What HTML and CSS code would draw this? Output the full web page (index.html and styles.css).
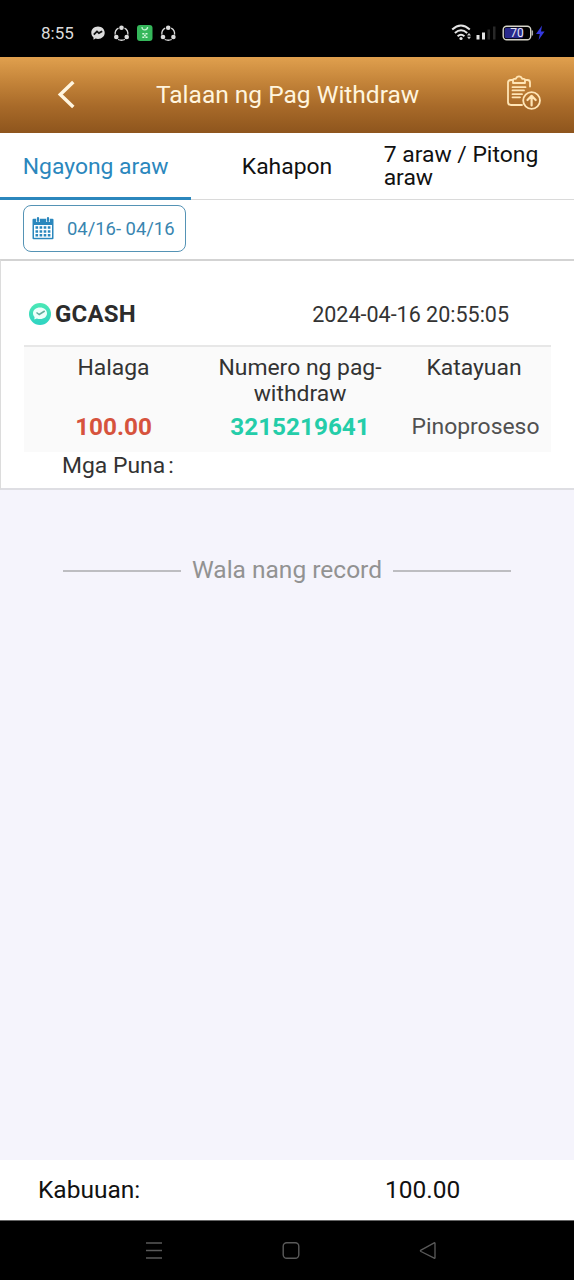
FILE: index.html
```html
<!DOCTYPE html>
<html lang="fil">
<head>
<meta charset="utf-8">
<title>Talaan ng Pag Withdraw</title>
<link rel="stylesheet" href="styles.css">
</head>
<body>
<div class="screen">
  <div class="status">
    <span class="clock">8:55</span>
    <svg class="status-left" width="88" height="20" viewBox="0 0 88 20">
      <g fill="#dcdcdc">
        <path d="M8 3.500C4 3.500 1.300 6.300 1.300 9.800c0 2 .9 3.600 2.200 4.700v2.200l2.100-1.100c.8.200 1.500.300 2.400.300 4 0 6.700-2.700 6.700-6.100S12 3.500 8 3.500z"/>
        <path d="M3.800 11.700L7 8.400l1.900 1.700 3.300-1.900" fill="none" stroke="#111" stroke-width="1.800"/>
      </g>
      <g id="share" fill="#dcdcdc">
        <path d="M28.500 5.200a6.300 6.300 0 0 0-3.300 6.500M34.500 5.200a6.300 6.300 0 0 1 3.300 6.500M28 16.500q3.500 1.500 7 0" fill="none" stroke="#dcdcdc" stroke-width="1.300"/>
        <circle cx="31.500" cy="4.700" r="2.300"/><circle cx="26.300" cy="14" r="2.300"/><circle cx="36.700" cy="14" r="2.300"/>
      </g>
      <rect x="47" y="2" width="15.500" height="16" rx="3" fill="#35b75b"/>
      <path d="M52 4q0 2.800 2.800 2.800T57.600 4" fill="none" stroke="#c5f5d3" stroke-width="1.300"/>
      <path d="M52.300 10.700h2M55.500 10.700h2M54 12.400h1.800M52.300 14.200h2M55.500 14.200h2" fill="none" stroke="#d5f9df" stroke-width="1.500"/>
      <use href="#share" x="46.700"/>
    </svg>
    <svg class="status-right" width="98" height="22" viewBox="0 0 98 22">
      <g fill="none" stroke="#e4e4e4" stroke-width="2">
        <path d="M1.200 7.500q8.700-8 17.600 0M3.900 11q6.100-5.500 12.300 0M6.600 14.200q3.400-3 6.800 0"/>
      </g>
      <circle cx="10" cy="16.500" r="1.600" fill="#e4e4e4"/>
      <path d="M16 13.500l2-2.500 2 2.500zM16 14.800l2 2.500 2-2.500z" fill="#ccc"/>
      <path d="M25.500 13h3v4.500h-3zM31 10.500h3v7h-3z" fill="#e4e4e4"/>
      <path d="M36.500 7.500h2.500v10h-2.500zM42 4.500h2.500v13H42z" fill="#282828"/>
      <rect x="52.200" y="4.300" width="27.500" height="13.400" rx="3.500" fill="#000" stroke="#d6d4c8" stroke-width="1.400"/>
      <rect x="53.600" y="5.700" width="18.500" height="10.600" rx="2" fill="#2a2a8c"/>
      <path d="M81.300 8.500v5" stroke="#aaa" stroke-width="1.500"/>
      <text x="65.900" y="15.300" text-anchor="middle" class="battery">70</text>
      <path d="M91 3.500L85 12h3.800l-1.200 6 6-8.500H90z" fill="#3438df"/>
    </svg>
  </div>

  <header class="header">
    <svg class="back" width="22" height="32" viewBox="0 0 22 32"><path d="M19.300 3L6.300 15.500l13 12.500" fill="none" stroke="#fff5df" stroke-width="3.500"/></svg>
    <h1 class="title">Talaan ng Pag Withdraw</h1>
    <svg class="report" width="38" height="38" viewBox="0 0 38 38" fill="none" stroke="#ffe5b5" stroke-width="1.800" stroke-linecap="round" stroke-linejoin="round">
      <path d="M8.500 5H7Q4 5 4 7.500V27q0 3 3 3h11M21.500 5h2Q26 5 26 7.500v4"/>
      <path d="M9 8V5q0-1.200 1.300-1.200h1.600q.8-2.400 3.100-2.400t3.100 2.400h1.700Q21 3.800 21 5v3z"/>
      <path d="M8.500 12.200h13M8.500 15.400h11.500M8.500 19.200h9.500M8.500 22.300h7.500"/>
      <circle cx="27.600" cy="25.500" r="8.400"/>
      <path d="M27.600 30.500v-9.500M23.500 25l4.100-4.100 4.100 4.100" stroke-width="2.200"/>
    </svg>
  </header>

  <nav class="tabs">
    <div class="tab active"><span class="t-now">Ngayong araw</span></div>
    <div class="tab"><span class="t-yest">Kahapon</span></div>
    <div class="tab week"><span class="t-week">7 araw / Pitong<br>araw</span></div>
  </nav>

  <div class="filter">
    <div class="date-button">
      <svg width="22" height="24" viewBox="0 0 22 24">
        <rect x="0.500" y="2.800" width="21" height="20.500" rx="1" fill="#2b87bd"/>
        <path d="M2 9h18v12.800H2z" fill="#fff"/>
        <path d="M4.200 1h3.600v5H4.200zM14.200 1h3.600v5h-3.600z" fill="#fff"/>
        <path d="M6 2v3M16 2v3" stroke="#2b87bd" stroke-width="2.200" stroke-linecap="round"/>
        <path d="M3.500 11.500h15.200M3.500 15.400h15.200M3.500 19.300h15.200" stroke="#2b87bd" stroke-width="2.500" stroke-dasharray="2.600 1.500"/>
      </svg>
      <span class="range">04/16- 04/16</span>
    </div>
  </div>

  <section class="card">
    <div class="card-head">
      <svg width="24" height="24" viewBox="0 0 24 24">
        <defs><linearGradient id="mint" x1="0" y1="0" x2="0" y2="1"><stop offset="0" stop-color="#4be8b4"/><stop offset="1" stop-color="#2ed3c3"/></linearGradient></defs>
        <circle cx="12" cy="12" r="11" fill="url(#mint)"/>
        <path d="M12 5.500c-4.300 0-7 2.600-7 5.800 0 1.500.6 2.800 1.600 3.800l-.3 2.400 2.600-1c1 .4 2 .6 3.100.6 4.300 0 7-2.500 7-5.800s-2.700-5.800-7-5.800z" fill="#edfffb"/>
        <path d="M8.500 10.500l2.700 2 5.500-3.500" fill="none" stroke="#63ad9d" stroke-width="1.500"/>
      </svg>
      <strong class="method">GCASH</strong>
      <span class="stamp">2024-04-16 20:55:05</span>
    </div>
    <div class="grid">
      <span class="c1">Halaga</span>
      <span class="c2">Numero ng pag-<br>withdraw</span>
      <span class="c3">Katayuan</span>
      <strong class="amount">100.00</strong>
      <strong class="number">3215219641</strong>
      <span class="state">Pinoproseso</span>
    </div>
    <div class="note"><span class="note-label">Mga Puna</span><span class="colon">:</span></div>
  </section>

  <main class="body">
    <div class="end"><i class="rule"></i><span class="end-text">Wala nang record</span><i class="rule"></i></div>
  </main>

  <footer class="total"><span class="total-label">Kabuuan:</span><span class="total-value">100.00</span></footer>

  <div class="navbar">
    <svg width="18" height="20" viewBox="0 0 18 20"><path d="M1 2h16M1 9.500h16M1 17h16" stroke="#5a5a5a" stroke-width="1.400"/></svg>
    <svg width="18" height="20" viewBox="0 0 18 20"><rect x="1.200" y="1.700" width="15.600" height="15.600" rx="3.500" fill="none" stroke="#5a5a5a" stroke-width="1.400"/></svg>
    <svg width="18" height="20" viewBox="0 0 18 20"><path d="M16 2.300v14.400q0 .8-.8.400L2 10.500q-1.200-.7 0-1.400L15.200 1.900q.8-.4.8.4z" fill="none" stroke="#5a5a5a" stroke-width="1.300"/></svg>
  </div>
</div>
</body>
</html>
```
FILE: styles.css
```css
* { box-sizing: border-box; }
body { margin: 0; font-family: Roboto, "Liberation Sans", sans-serif; background: #000; }
svg { display: block; flex: none; }
span, strong { white-space: nowrap; }
.screen { width: 574px; height: 1280px; display: flex; flex-direction: column; }

.status { height: 57px; flex: none; background: #000; display: flex; align-items: center; padding: 9px 25px 0 41px; }
.clock { font-size: 17px; color: #dcdcdc; width: 49px; }
.battery { font-size: 12px; fill: #e6e6f2; font-family: Roboto, sans-serif; }
.status-right { margin-left: auto; }

.header { height: 76px; flex: none; display: flex; align-items: center; padding: 0 32px 0 54px; background: linear-gradient(#e0a04e, #c28238 35%, #a86a29 65%, #8e551d); }
.title { margin: 0 0 0 80px; font-size: 24.500px; font-weight: 400; line-height: 30px; color: #fff5df; white-space: nowrap; }
.report { margin: -3px 0 0 auto; }

.tabs { height: 67px; flex: none; display: grid; grid-template-columns: repeat(3, 1fr); background: #fff; border-bottom: 1px solid #dadada; font-size: 22.900px; line-height: 23px; color: #111; }
.tab { display: flex; align-items: center; justify-content: center; padding-bottom: 1px; }
.active { color: #2b87bd; border-bottom: 3px solid #2b87bd; height: 67px; padding-top: 3px; padding-bottom: 0; }
.week { justify-content: flex-start; padding-left: 1px; }

.filter { height: 60px; flex: none; background: #fff; padding: 5px 0 0 23px; }
.date-button { width: 163px; height: 47px; border: 1.500px solid #5593b5; border-radius: 8px; display: flex; align-items: center; padding: 0 0 1px 8px; }
.range { margin-left: 13px; font-size: 18.400px; color: #3985b0; }

.card { height: 231px; flex: none; background: #fff; border-top: 2px solid #d3d3d3; border-left: 1px solid #dcdcdc; border-bottom: 2px solid #dedee3; margin-top: -1px; padding: 0 23px; color: #333; font-size: 22.900px; }
.card-head { height: 84px; display: flex; align-items: center; padding: 22px 42px 0 4px; }
.method { font-size: 24px; font-weight: 700; letter-spacing: 0.200px; margin-left: 3px; color: #2c2c2c; }
.stamp { margin-left: auto; font-size: 21.500px; }
.grid { height: 107px; border-top: 2px solid #e7e7e7; background: #fafafa; display: grid; grid-template-columns: 179px 194px 1fr; grid-template-rows: 53px 38px; align-content: start; text-align: center; line-height: 26px; padding-top: 8px; }
.grid strong, .state { line-height: 38px; }
.amount { color: #d6533d; font-size: 24.300px; }
.number { color: #24cda9; font-size: 24.300px; }
.state { color: #505050; padding-left: 3px; }
.note { padding: 1px 0 0 38px; line-height: 26px; }
.colon { margin-left: 3px; }

.body { flex: 1; background: #f5f4fc; padding-top: 65px; }
.end { display: flex; align-items: center; justify-content: center; gap: 11px; height: 32px; font-size: 24.500px; color: #929292; }
.end-text { line-height: 28px; padding-bottom: 2px; }
.rule { width: 118px; height: 2px; background: #bdbdc1; }

.total { height: 60px; flex: none; background: #fff; display: grid; grid-template-columns: 347px 1fr; align-items: center; padding: 0 0 2px 38px; font-size: 24.500px; color: #111; }
.navbar { height: 60px; flex: none; background: #000; border-top: 1px solid #666; display: flex; align-items: center; gap: 119px; padding-left: 145px; }
```
